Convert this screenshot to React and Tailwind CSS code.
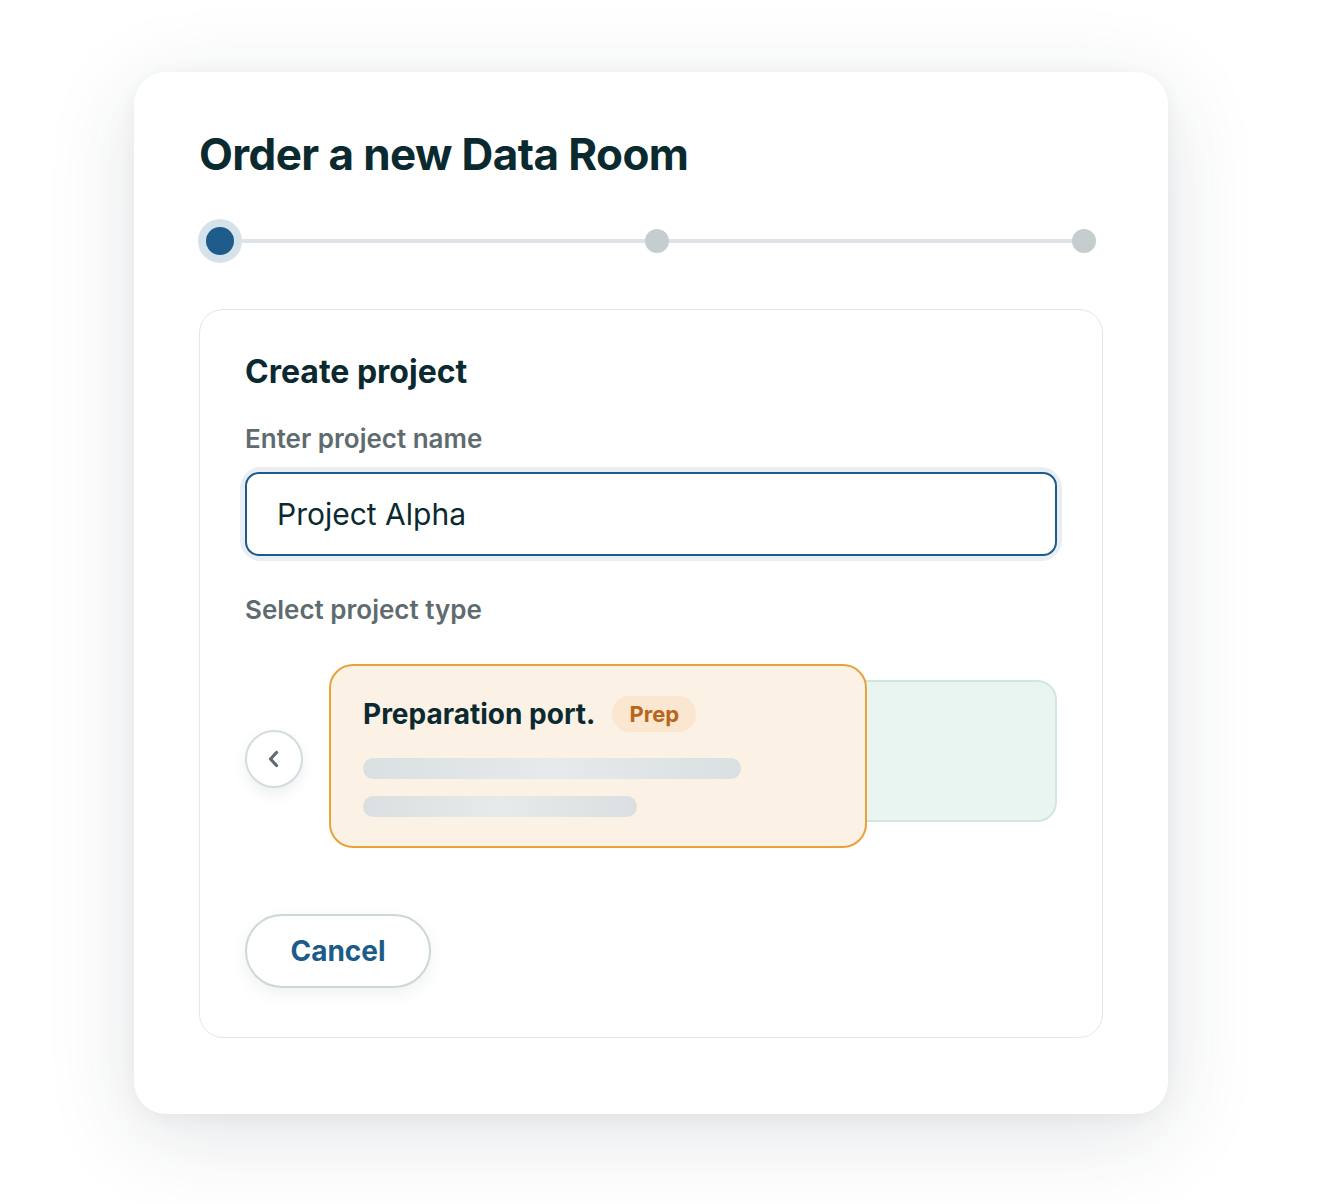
import React, { useState } from "react";

// Stepper across the top of the order dialog
function Stepper({ current = 0, steps = 3 }) {
  return (
    <div className="relative w-[898px] h-[44px] flex items-center justify-between">
      <div className="absolute left-[22px] right-[12px] top-1/2 -translate-y-1/2 h-[4px] bg-[#dce2e5]" />
      {Array.from({ length: steps }).map((_, i) =>
        i === current ? (
          <div key={i} className="relative z-10 w-[44px] h-[44px] rounded-full bg-[#d6e2ea] grid place-items-center">
            <div className="w-[28px] h-[28px] rounded-full bg-[#1c5b8a]" />
          </div>
        ) : (
          <div key={i} className="relative z-10 w-[24px] h-[24px] rounded-full bg-[#c5cdcf]" />
        )
      )}
    </div>
  );
}

function SkeletonBar({ width }) {
  return (
    <div
      className={`h-[21px] rounded-full bg-gradient-to-r from-[#dadfe1] via-[#e6eaea] to-[#dadfe1] ${width}`}
    />
  );
}

export default function App() {
  const [name, setName] = useState("Project Alpha");

  return (
    <div className="min-h-screen bg-white pt-[72px] pb-[90px]" style={{ fontFamily: "Inter, 'Noto Sans', sans-serif" }}>
      <div className="ml-[134px] w-[1034px] rounded-[32px] bg-white shadow-[0_20px_90px_rgba(30,50,60,0.13),0_4px_18px_rgba(30,50,60,0.05)] px-[65px] pb-[76px]">
        <div className="pt-[56px]">
          <h1 className="text-[44px] leading-[53px] font-bold text-[#0b2a30] tracking-[-0.6px]">
            Order a new Data Room
          </h1>
        </div>

        <div className="mt-[38px] -ml-[1px]">
          <Stepper current={0} steps={3} />
        </div>

        <div className="mt-[46px] rounded-[24px] border-[1.5px] border-[#e3e7e8] px-[45px] pt-[44px] pb-[49px]">
          <h2 className="text-[32px] leading-[36px] font-bold text-[#0b2a30]">Create project</h2>

          <label className="block mt-[34px] text-[26px] leading-[30px] font-semibold text-[#5f6b6e]">
            Enter project name
          </label>
          <div className="mt-[18px] rounded-[16px] shadow-[0_0_0_5px_#e8eef3]">
            <input
              value={name}
              onChange={(e) => setName(e.target.value)}
              className="block w-full h-[84px] rounded-[14px] border-2 border-[#1c5b8a] bg-white px-[30px] text-[30px] text-[#0b2a30] outline-none"
            />
          </div>

          <div className="mt-[39px] text-[26px] leading-[30px] font-semibold text-[#5f6b6e]">
            Select project type
          </div>

          <div className="mt-[39px] flex items-start">
            <button className="mt-[66px] w-[58px] h-[58px] shrink-0 rounded-full border-2 border-[#d3dcde] bg-white grid place-items-center shadow-[0_6px_14px_rgba(30,50,60,0.08)]">
              <svg width="16" height="20" viewBox="0 0 16 20" fill="none">
                <path d="M10.5 3.5L4.5 10l6 6.5" stroke="#5f6b6e" strokeWidth="3.2" strokeLinecap="round" strokeLinejoin="round" />
              </svg>
            </button>

            <div className="ml-[26px] relative z-10 w-[538px] h-[184px] shrink-0 rounded-[24px] border-2 border-[#e8a23c] bg-[#fbf1e4] px-[32px] pt-[30px]">
              <div className="flex items-center">
                <span className="text-[28px] leading-[36px] font-bold text-[#0b2a30]">Preparation port.</span>
                <span className="ml-[17px] h-[36px] px-[17px] rounded-full bg-[#fbe6cf] text-[#b8651c] text-[22px] font-bold flex items-center">
                  Prep
                </span>
              </div>
              <div className="mt-[26px] flex flex-col gap-[17px]">
                <SkeletonBar width="w-[378px]" />
                <SkeletonBar width="w-[274px]" />
              </div>
            </div>

            <div className="mt-[16px] -ml-[70px] w-[260px] h-[142px] shrink-0 rounded-[20px] border-2 border-[#cfe8df] bg-[#e8f5f0]" />
          </div>

          <button className="mt-[66px] h-[74px] w-[186px] rounded-full border-2 border-[#cdd6d8] bg-white text-[28px] font-bold text-[#1c5b8a] shadow-[0_6px_16px_rgba(30,50,60,0.07)]">
            Cancel
          </button>
        </div>
      </div>
    </div>
  );
}
